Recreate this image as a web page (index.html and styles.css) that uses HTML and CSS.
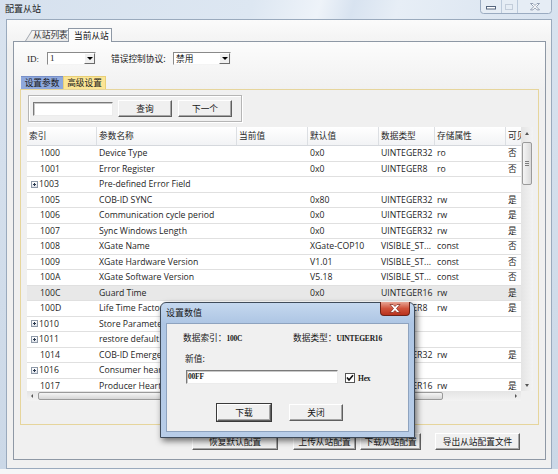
FILE: index.html
```html
<!DOCTYPE html>
<html lang="zh-CN">
<head>
  <meta charset="UTF-8">
  <meta name="viewport" content="width=device-width, initial-scale=1.0">
  <title>配置从站</title>
  <link rel="stylesheet" href="styles.css">
</head>
<body>
  <div class="window">
    <div class="titlebar">
      <span class="title">配置从站</span>
      <svg class="caption-btns" width="72" height="14" viewBox="0 0 72 14">
        <path d="M0.5 0 V10.5 Q0.5 13.5 3.5 13.5 H68.5 Q71.5 13.5 71.5 10.5 V0" fill="#e6edf5" stroke="#9aabc1"/>
        <line x1="21.5" y1="0" x2="21.5" y2="13" stroke="#bccadb"/>
        <line x1="37.5" y1="0" x2="37.5" y2="13" stroke="#bccadb"/>
        <rect x="6.5" y="6.5" width="9" height="2.5" fill="#fff" stroke="#55657d"/>
        <rect x="25.5" y="4.5" width="7" height="5" fill="none" stroke="#c3cdda"/>
        <path d="M50.5 3.5 h2.5 l2 2 l2 -2 h2.5 l-3.2 3.2 l3.2 3.2 h-2.5 l-2 -2 l-2 2 h-2.5 l3.2 -3.2 z" fill="#fff" stroke="#7d8ca2" stroke-width="0.8"/>
      </svg>
    </div>

    <div class="client">
      <div class="tabs">
        <span class="tab">从站列表</span>
        <span class="tab active">当前从站</span>
      </div>

      <div class="tabpage">
        <div class="id-row">
          <span class="id-label">ID:</span>
          <div class="combo combo-id">
            <span class="combo-val serif">1</span>
            <span class="combo-btn"><i class="arrow-down"></i></span>
          </div>
          <span class="err-label">错误控制协议:</span>
          <div class="combo combo-err">
            <span class="combo-val">禁用</span>
            <span class="combo-btn"><i class="arrow-down"></i></span>
          </div>
        </div>

        <div class="subtabs">
          <span class="subtab blue">设置参数</span>
          <span class="subtab yellow">高级设置</span>
        </div>

        <div class="subpage">
          <div class="search">
            <div class="field search-field"></div>
            <button class="btn btn-query">查询</button>
            <button class="btn btn-next">下一个</button>
          </div>

          <div class="list">
            <div class="list-view">
              <div class="list-head">
                <span class="c1">索引</span>
                <span class="c2">参数名称</span>
                <span class="c3">当前值</span>
                <span class="c4">默认值</span>
                <span class="c5">数据类型</span>
                <span class="c6">存储属性</span>
                <span class="c7">可见</span>
              </div>
              <div class="row"><span class="c1">1000</span><span class="c2">Device Type</span><span class="c3"></span><span class="c4">0x0</span><span class="c5">UINTEGER32</span><span class="c6">ro</span><span class="c7">否</span></div>
              <div class="row"><span class="c1">1001</span><span class="c2">Error Register</span><span class="c3"></span><span class="c4">0x0</span><span class="c5">UINTEGER8</span><span class="c6">ro</span><span class="c7">否</span></div>
              <div class="row"><span class="c1 group"><i class="plus"></i>1003</span><span class="c2">Pre-defined Error Field</span></div>
              <div class="row"><span class="c1">1005</span><span class="c2">COB-ID SYNC</span><span class="c3"></span><span class="c4">0x80</span><span class="c5">UINTEGER32</span><span class="c6">rw</span><span class="c7">是</span></div>
              <div class="row"><span class="c1">1006</span><span class="c2">Communication cycle period</span><span class="c3"></span><span class="c4">0x0</span><span class="c5">UINTEGER32</span><span class="c6">rw</span><span class="c7">是</span></div>
              <div class="row"><span class="c1">1007</span><span class="c2">Sync Windows Length</span><span class="c3"></span><span class="c4">0x0</span><span class="c5">UINTEGER32</span><span class="c6">rw</span><span class="c7">是</span></div>
              <div class="row"><span class="c1">1008</span><span class="c2">XGate Name</span><span class="c3"></span><span class="c4">XGate-COP10</span><span class="c5">VISIBLE_ST...</span><span class="c6">const</span><span class="c7">否</span></div>
              <div class="row"><span class="c1">1009</span><span class="c2">XGate Hardware Version</span><span class="c3"></span><span class="c4">V1.01</span><span class="c5">VISIBLE_ST...</span><span class="c6">const</span><span class="c7">否</span></div>
              <div class="row"><span class="c1">100A</span><span class="c2">XGate Software Version</span><span class="c3"></span><span class="c4">V5.18</span><span class="c5">VISIBLE_ST...</span><span class="c6">const</span><span class="c7">否</span></div>
              <div class="row selected"><span class="c1">100C</span><span class="c2">Guard Time</span><span class="c3"></span><span class="c4">0x0</span><span class="c5">UINTEGER16</span><span class="c6">rw</span><span class="c7">是</span></div>
              <div class="row"><span class="c1">100D</span><span class="c2">Life Time Factor</span><span class="c3"></span><span class="c4">0x0</span><span class="c5">UINTEGER8</span><span class="c6">rw</span><span class="c7">是</span></div>
              <div class="row"><span class="c1 group"><i class="plus"></i>1010</span><span class="c2">Store Parameters</span></div>
              <div class="row"><span class="c1 group"><i class="plus"></i>1011</span><span class="c2">restore default parameters</span></div>
              <div class="row"><span class="c1">1014</span><span class="c2">COB-ID Emergency</span><span class="c3"></span><span class="c4">0x80</span><span class="c5">UINTEGER32</span><span class="c6">rw</span><span class="c7">是</span></div>
              <div class="row"><span class="c1 group"><i class="plus"></i>1016</span><span class="c2">Consumer heartbeat time</span></div>
              <div class="row"><span class="c1">1017</span><span class="c2">Producer Heartbeat Time</span><span class="c3"></span><span class="c4">0x0</span><span class="c5">UINTEGER16</span><span class="c6">rw</span><span class="c7">是</span></div>
            </div>

            <div class="vscroll">
              <span class="sb-btn"><i class="arrow-up small"></i></span>
              <span class="vthumb"><i></i><i></i><i></i></span>
              <span class="sb-btn sb-end"><i class="arrow-down small"></i></span>
            </div>
            <div class="hscroll">
              <span class="sb-btn"><i class="arrow-left"></i></span>
              <span class="hthumb"></span>
              <span class="sb-btn sb-end"><i class="arrow-right"></i></span>
            </div>
            <div class="corner"></div>
          </div>
        </div>

        <div class="actions">
          <button class="btn btn-restore">恢复默认配置</button>
          <button class="btn btn-upload">上传从站配置</button>
          <button class="btn btn-download">下载从站配置</button>
          <button class="btn btn-export">导出从站配置文件</button>
        </div>
      </div>
    </div>

    <div class="dialog">
      <div class="dialog-title">
        设置数值
        <span class="dialog-close">
          <svg width="12" height="9" viewBox="0 0 12 9">
            <path d="M1 0.5 h3 l2 2 l2 -2 h3 l-3.5 4 l3.5 4 h-3 l-2 -2 l-2 2 h-3 l3.5 -4 z" fill="#fff" stroke="#7a2418" stroke-width="0.7"/>
          </svg>
        </span>
      </div>
      <div class="dialog-body">
        <div class="info-row">
          <span class="info-item">数据索引：<span class="serif">100C</span></span>
          <span>数据类型：<span class="serif">UINTEGER16</span></span>
        </div>
        <div class="new-label">新值:</div>
        <div class="input-row">
          <div class="field value-field serif">00FF</div>
          <svg class="checkbox" width="10" height="10" viewBox="0 0 10 10">
            <rect x="0.5" y="0.5" width="9" height="9" fill="#fff" stroke="#555"/>
            <path d="M2 4.5 L4 7 L8 2.2" fill="none" stroke="#111" stroke-width="1.6"/>
          </svg>
          <span class="hex serif">Hex</span>
        </div>
        <div class="dialog-actions">
          <button class="btn default">下载</button>
          <button class="btn">关闭</button>
        </div>
      </div>
    </div>
  </div>
</body>
</html>
```

FILE: styles.css
```css
* {
  box-sizing: border-box;
}

body {
  margin: 0;
  width: 558px;
  height: 474px;
  overflow: hidden;
  background: #f5f6f7;
  font-family: "Open Sans", "Noto Sans CJK SC", sans-serif;
  font-size: 8.7px;
  color: #1e1e1e;
}

.serif {
  font-family: "Liberation Serif", "Noto Sans CJK SC", serif;
}

button {
  font-family: "Noto Sans CJK SC", sans-serif;
}

.window {
  position: relative;
  width: 558px;
  height: 469px;
  background: linear-gradient(#d9e3ef, #cbd8e7);
}

/* title bar */
.titlebar {
  display: flex;
  align-items: flex-start;
  height: 19px;
  background: linear-gradient(105deg, #d6e1ee 0%, #dde7f2 45%, #eef3f9 57%, #d8e3f0 63%, #e7eef6 71%, #d7e2ef 100%);
}

.title {
  padding: 3px 0 0 5px;
  line-height: 12px;
  font-family: "Noto Sans CJK SC", sans-serif;
  font-size: 9px;
  color: #1a1a1a;
}

.caption-btns {
  margin-left: auto;
  margin-right: 6px;
}

/* client area */
.client {
  height: 450px;
  margin: 0 6px;
  border: 1px solid #9aaabd;
  background: linear-gradient(#fbfbfb, #f0f0f0 30px);
}

.tabs {
  display: flex;
  align-items: flex-end;
  height: 21px;
  padding-left: 18px;
  font-family: "Noto Sans CJK SC", sans-serif;
}

.tab {
  position: relative;
  z-index: 0;
  width: 45px;
  height: 11px;
  padding-left: 8px;
  line-height: 10px;
  color: #333;
}

.tab::before {
  content: "";
  position: absolute;
  inset: 0;
  z-index: -1;
  border: 1px solid #9ea4ad;
  border-bottom: none;
  background: linear-gradient(#f8f8f8, #e8e8e8);
  transform-origin: bottom left;
  transform: skewX(-32deg);
}

.tab.active {
  z-index: 1;
  width: 44px;
  height: 14px;
  margin-left: -2px;
  margin-bottom: -1px;
  padding-left: 5px;
  line-height: 13px;
  color: #111;
  border: 1px solid #8e98a5;
  border-bottom: none;
  background: #fcfcfc;
}

.tab.active::before {
  display: none;
}

.tabpage {
  position: relative;
  height: 419px;
  margin: 0 5px 0 6px;
  border: 1px solid #8e98a5;
  background: linear-gradient(#fcfcfc, #f0f0f0 50px);
}

/* id row */
.id-row {
  display: flex;
  align-items: center;
  height: 23px;
  padding: 10px 0 0 13px;
}

.id-label {
  width: 20px;
  font-family: "Liberation Serif", serif;
  font-size: 9px;
}

.err-label {
  width: 62px;
  margin-left: 15px;
  font-family: "Noto Sans CJK SC", sans-serif;
}

.combo {
  display: flex;
  height: 13px;
  background: #fff;
  border: 1px solid;
  border-color: #8a8a8a #f4f4f4 #f4f4f4 #8a8a8a;
}

.combo-id {
  width: 49px;
}

.combo-err {
  width: 58px;
}

.combo-val {
  flex: 1;
  padding-left: 2px;
  line-height: 11px;
  font-family: "Noto Sans CJK SC", sans-serif;
}

.combo-val.serif {
  font-family: "Liberation Serif", serif;
  font-size: 9px;
}

.combo-btn {
  display: flex;
  align-items: center;
  justify-content: center;
  width: 11px;
  background: #f0f0f0;
  border: 1px solid;
  border-color: #fff #6b6b6b #6b6b6b #fff;
}

.arrow-down,
.arrow-up,
.arrow-left,
.arrow-right {
  display: block;
  width: 0;
  height: 0;
}

.arrow-down {
  border-left: 3px solid transparent;
  border-right: 3px solid transparent;
  border-top: 3px solid #000;
}

.arrow-up {
  border-left: 3px solid transparent;
  border-right: 3px solid transparent;
  border-bottom: 3px solid #000;
}

.arrow-down.small,
.arrow-up.small {
  border-left-width: 2px;
  border-right-width: 2px;
  border-top-color: #555;
  border-bottom-color: #555;
}

.arrow-left {
  border-top: 2px solid transparent;
  border-bottom: 2px solid transparent;
  border-right: 2px solid #555;
}

.arrow-right {
  border-top: 2px solid transparent;
  border-bottom: 2px solid transparent;
  border-left: 2px solid #555;
}

/* inner tabs */
.subtabs {
  display: flex;
  height: 13px;
  margin-top: 11px;
  padding-left: 7px;
  font-family: "Noto Sans CJK SC", sans-serif;
}

.subtab {
  height: 13px;
  line-height: 13px;
  text-align: center;
  color: #1a1a1a;
}

.subtab.blue {
  width: 42px;
  background: #8ea8dd;
  border-top: 1px solid #7890c8;
  line-height: 12px;
}

.subtab.yellow {
  width: 43px;
  background: #fbe595;
  border: 1px solid #e8cf78;
  border-bottom: none;
  line-height: 12px;
}

.subpage {
  width: 519px;
  height: 336px;
  margin-left: 6px;
  border: 1px solid #e6d59c;
  background: #f0f0f0;
}

/* search group */
.search {
  display: flex;
  align-items: center;
  width: 214px;
  height: 27px;
  margin: 5px 0 0 7px;
  padding-left: 4px;
  border: 1px solid #b5b5b5;
  box-shadow: inset 1px 1px #fff, 1px 1px #fff;
}

.field {
  background: #fff;
  border: 1px solid;
  border-color: #7a7a7a #ececec #ececec #7a7a7a;
  box-shadow: inset 1px 1px #c8c8c8;
}

.search-field {
  width: 80px;
  height: 14px;
}

.btn {
  display: flex;
  align-items: center;
  justify-content: center;
  width: 54px;
  height: 17px;
  padding: 0;
  font-size: 8.7px;
  color: #151515;
  background: #f0f0f0;
  border: 1px solid;
  border-color: #fff #5f5f5f #5f5f5f #fff;
  box-shadow: inset -1px -1px #a6a6a6;
}

.btn-query {
  margin: 0 0 1px 5px;
}

.btn-next {
  margin: 0 0 1px 6px;
}

/* list */
.list {
  display: grid;
  grid-template-columns: 494px 12px;
  grid-template-rows: 264px 10px;
  width: 506px;
  height: 274px;
  margin: 5px 0 0 6px;
}

.list-view {
  overflow: hidden;
  background: #fff;
}

.list-head {
  display: flex;
  height: 19px;
  background: linear-gradient(#fff, #f2f3f5);
  border-bottom: 1px solid #d5d8dd;
  font-family: "Noto Sans CJK SC", sans-serif;
  color: #2a2a2a;
}

.list-head span {
  flex: none;
  padding-left: 2px;
  line-height: 18px;
  border-right: 1px solid #dcdfe3;
}

.row {
  display: flex;
  height: 15.5px;
  border-bottom: 1px solid #e0e0e0;
  line-height: 14.5px;
  white-space: nowrap;
}

.row span {
  flex: none;
  overflow: hidden;
  padding-left: 2px;
}

.row.selected {
  background: #e8e8e8;
}

.c1 { width: 70px; }
.c2 { width: 140px; }
.c3 { width: 71px; }
.c4 { width: 71px; }
.c5 { width: 56px; }
.c6 { width: 71px; }
.c7 { width: 40px; }

.row .c1 {
  padding-left: 13px;
}

.row .c1.group {
  display: flex;
  align-items: center;
  padding-left: 4px;
}

.plus {
  position: relative;
  display: block;
  width: 7px;
  height: 7px;
  margin-right: 1px;
  border: 1px solid #8e99a8;
  background: linear-gradient(#fff, #dfe3ea);
}

.plus::before,
.plus::after {
  content: "";
  position: absolute;
  background: #2b3a4f;
}

.plus::before {
  left: 1px;
  top: 2px;
  width: 3px;
  height: 1px;
}

.plus::after {
  left: 2px;
  top: 1px;
  width: 1px;
  height: 3px;
}

.vscroll {
  display: flex;
  flex-direction: column;
  background: linear-gradient(90deg, #e4e4e4, #f3f3f3);
}

.hscroll {
  display: flex;
  background: linear-gradient(#e4e4e4, #f3f3f3);
}

.corner {
  background: #f0f0f0;
}

.sb-btn {
  display: flex;
  align-items: center;
  justify-content: center;
  flex: none;
  width: 12px;
  height: 12px;
}

.hscroll .sb-btn {
  width: 10px;
  height: 10px;
}

.sb-end {
  margin-top: auto;
  margin-left: auto;
}

.hscroll .sb-end {
  margin-top: 0;
}

.vthumb {
  display: flex;
  flex-direction: column;
  align-items: center;
  justify-content: center;
  gap: 1px;
  height: 43px;
  margin: 3px 1px 0;
  border: 1px solid #9a9a9a;
  border-radius: 2px;
  background: linear-gradient(90deg, #f5f5f5, #dadada);
}

.vthumb i {
  display: block;
  width: 4px;
  height: 1px;
  background: #7d7d7d;
}

.hthumb {
  width: 405px;
  margin: 1px 0 1px 1px;
  border: 1px solid #9a9a9a;
  border-radius: 2px;
  background: linear-gradient(#f5f5f5, #d6d6d6);
}

/* bottom buttons */
.actions {
  display: flex;
  margin-top: 8px;
  padding-left: 178px;
}

.btn-restore { width: 86px; }
.btn-upload { width: 63px; margin-left: 15px; }
.btn-download { width: 61px; margin-left: 4px; }
.btn-export { width: 85px; margin-left: 14px; }

/* modal dialog */
.dialog {
  position: absolute;
  left: 160px;
  top: 302px;
  display: flex;
  flex-direction: column;
  width: 255px;
  height: 136px;
  border: 1px solid #3f4b5a;
  border-radius: 6px 6px 0 0;
  background: linear-gradient(#c5d8ef, #aec6e4 20px, #b8cde8);
  box-shadow: 2px 3px 6px rgba(0, 0, 0, 0.55);
  font-family: "Noto Sans CJK SC", sans-serif;
}

.dialog-title {
  position: relative;
  height: 20px;
  padding: 4px 0 0 5px;
  line-height: 12px;
  font-size: 9px;
  color: #1a1a1a;
}

.dialog-close {
  position: absolute;
  top: -1px;
  right: 4px;
  display: flex;
  align-items: center;
  justify-content: center;
  width: 30px;
  height: 14px;
  border: 1px solid #6d2218;
  border-top: none;
  border-radius: 0 0 4px 4px;
  background: linear-gradient(#e8a493, #d0533c 50%, #b9321e);
}

.dialog-body {
  flex: 1;
  margin: 0 5px 5px;
  border: 1px solid #8ea3bf;
  background: #f0f0f0;
  color: #1a1a1a;
}

.dialog-body .serif {
  font-size: 7.5px;
  font-weight: bold;
  letter-spacing: -0.2px;
}

.info-row {
  display: flex;
  padding: 8px 0 0 16px;
  line-height: 12px;
}

.info-item {
  width: 110px;
}

.new-label {
  margin: 8px 0 0 18px;
  line-height: 12px;
}

.input-row {
  display: flex;
  align-items: flex-end;
  margin: 5px 0 0 19px;
}

.value-field {
  width: 152px;
  height: 14px;
  padding-left: 1px;
  line-height: 12px;
}

.checkbox {
  margin-left: 7px;
  margin-bottom: 1px;
}

.hex {
  margin-left: 3px;
  line-height: 10px;
}

.dialog-actions {
  display: flex;
  gap: 18px;
  margin: 20px 0 0 50px;
}

.btn.default {
  outline: 1px solid #3a3a3a;
  outline-offset: 0;
}
```
